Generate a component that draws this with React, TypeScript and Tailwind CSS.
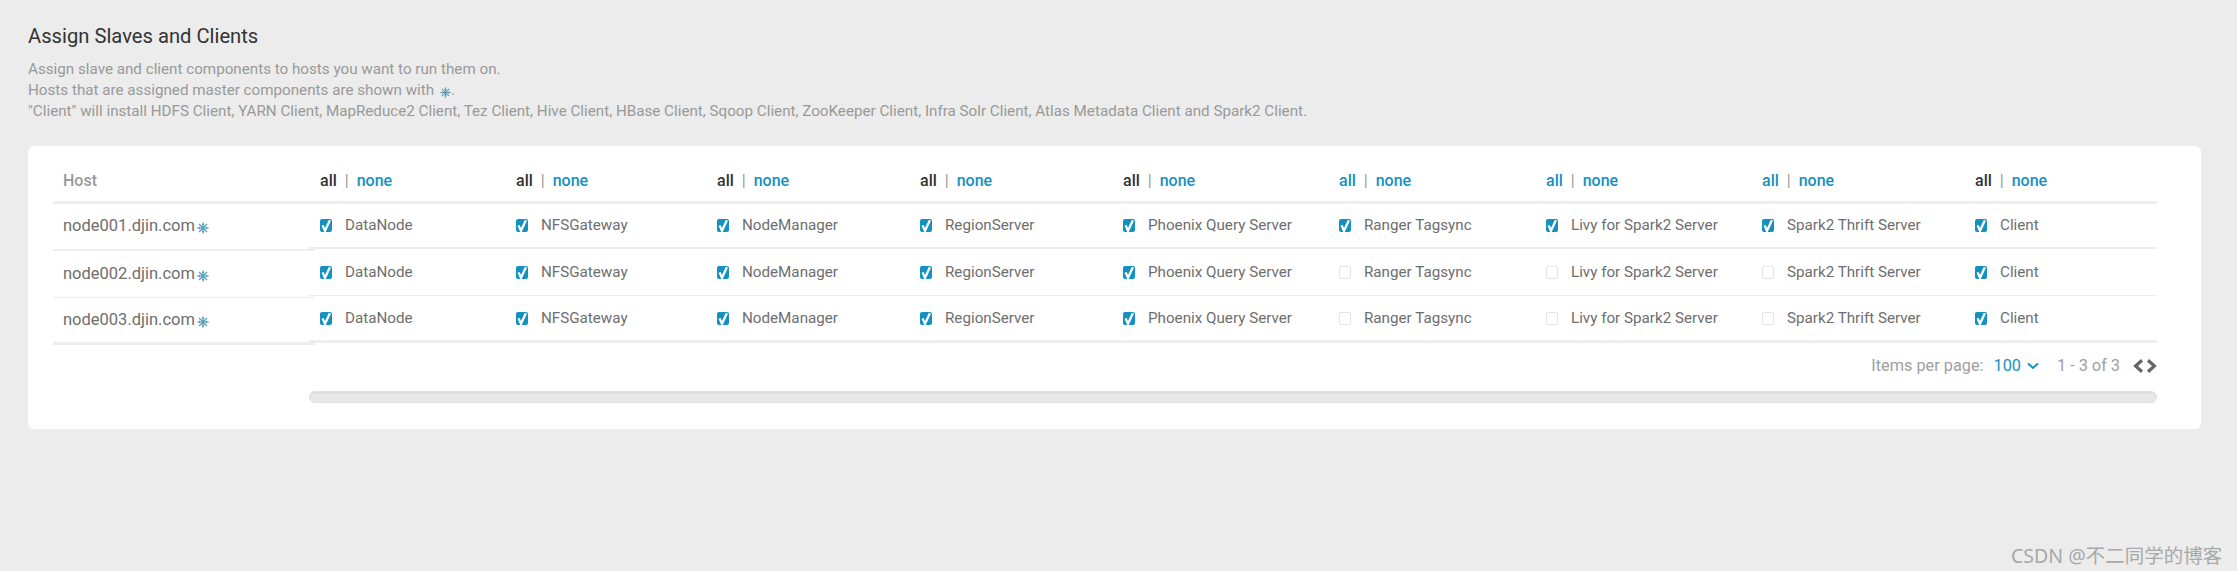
const blue = "text-[#1491c1]";

const columns = [
  { w: "w-[196px]", allBlue: false, label: "DataNode", on: [true, true, true] },
  { w: "w-[201px]", allBlue: false, label: "NFSGateway", on: [true, true, true] },
  { w: "w-[203px]", allBlue: false, label: "NodeManager", on: [true, true, true] },
  { w: "w-[203px]", allBlue: false, label: "RegionServer", on: [true, true, true] },
  { w: "w-[216px]", allBlue: false, label: "Phoenix Query Server", on: [true, true, true] },
  { w: "w-[207px]", allBlue: true, label: "Ranger Tagsync", on: [true, false, false] },
  { w: "w-[216px]", allBlue: true, label: "Livy for Spark2 Server", on: [true, false, false] },
  { w: "w-[213px]", allBlue: true, label: "Spark2 Thrift Server", on: [true, false, false] },
  { w: "w-[193px]", allBlue: false, label: "Client", on: [true, true, true] },
];

function Star({ className = "" }: { className?: string }) {
  return (
    <svg viewBox="0 0 12 12" className={className} fill="none" stroke="#5d9fb8" strokeWidth="1.2">
      <path d="M6 .2v11.6M.2 6h11.6M2 2l8 8M10 2l-8 8M5 2 6 3.2 7 2M5 10 6 8.8 7 10M2 5 3.2 6 2 7M10 5 8.8 6 10 7" />
    </svg>
  );
}

function Check({ on }: { on: boolean }) {
  if (!on)
    return <span className="block w-[12px] h-[13px] rounded-[2px] border border-[#e4e4e4] bg-white shrink-0" />;
  return (
    <span className="block w-[12px] h-[13px] rounded-[2px] bg-[#1491c1] shrink-0 overflow-hidden">
      <svg viewBox="0 0 12 13" className="w-[12px] h-[13px]" fill="none" stroke="#fff" strokeWidth="2.3">
        <path d="M2.6 6.4 5 11.8 9.9 1.2" />
      </svg>
    </span>
  );
}

const hosts = ["node001.djin.com", "node002.djin.com", "node003.djin.com"];
const leftRows = ["h-[47px]", "h-[47px]", "h-[47px]"];
const rightRows = ["h-[45px]", "h-[47px]", "h-[47px]"];
const rowBorders = ["border-b-2 border-[#eeeeee]", "border-b border-[#eeeeee]", "border-b-[3px] border-[#eeeeee]"];

export default function App() {
  return (
    <div className="min-h-[571px] bg-[#ececec] relative font-['Roboto',sans-serif]">
      <div className="pt-[26px] pl-[28px] pr-[36px]">
        <h1 className="text-[20.2px] leading-[21px] font-normal text-[#333333]">Assign Slaves and Clients</h1>
        <div className="mt-[11px] pt-[1px] text-[15.2px] leading-[21px] text-[#999999]">
          <p>Assign slave and client components to hosts you want to run them on.</p>
          <p className="flex items-center">
            Hosts that are assigned master components are shown with
            <Star className="w-[11px] h-[11px] ml-[6px] mt-[3px]" />
            <span>.</span>
          </p>
          <p>
            "Client" will install HDFS Client, YARN Client, MapReduce2 Client, Tez Client, Hive Client, HBase Client, Sqoop Client, ZooKeeper Client, Infra Solr Client, Atlas Metadata Client and Spark2 Client.
          </p>
        </div>

        <div className="mt-[24px] bg-white rounded-[6px] h-[283px] pt-[11px] pl-[25px] pr-[44px]">
          <div className="flex w-[2104px]">
            <div className="w-[262px] shrink-0">
              <div className="h-[47px] border-b-[3px] border-[#eeeeee] pl-[10px] pt-[3px] flex items-center text-[16px] font-medium text-[#999999]">
                Host
              </div>
              {hosts.map((h, i) => (
                <div key={h} className={`${leftRows[i]} ${rowBorders[i]} pl-[10px] flex items-center text-[16.5px] text-[#6e6e6e]`}>
                  <span>{h}</span>
                  <Star className="w-[12px] h-[12px] ml-[2px] mt-[3px]" />
                </div>
              ))}
            </div>
            <div className="-ml-[6px] flex-1">
              <div className="flex h-[47px] border-b-[3px] border-[#eeeeee]">
                {columns.map((c, i) => (
                  <div key={i} className={`${c.w} pl-[11px] pt-[3px] flex items-center text-[16px] font-medium`}>
                    <span className={c.allBlue ? blue : "text-[#333333]"}>all</span>
                    <span className="mx-[8px] font-normal text-[#999999]">|</span>
                    <span className={blue}>none</span>
                  </div>
                ))}
              </div>
              {[0, 1, 2].map((r) => (
                <div key={r} className={`flex ${rightRows[r]} ${rowBorders[r]}`}>
                  {columns.map((c, i) => (
                    <div key={i} className={`${c.w} pl-[11px] flex items-center text-[15.2px] text-[#6e6e6e]`}>
                      <Check on={c.on[r]} />
                      <span className="ml-[13px]">{c.label}</span>
                    </div>
                  ))}
                </div>
              ))}
              <div className="flex items-center justify-end h-[48px] text-[16.3px] text-[#a0a0a0] pb-[2px]">
                <span>Items per page:</span>
                <span className={`ml-[10px] ${blue}`}>100</span>
                <svg viewBox="0 0 12 8" className="w-[12px] h-[8px] ml-[6px]" fill="none" stroke="#1491c1" strokeWidth="2">
                  <path d="M1 1.5 6 6l5-4.5" />
                </svg>
                <span className="ml-[18px]">1 - 3 of 3</span>
                <svg viewBox="0 0 24 14" className="w-[24px] h-[14px] ml-[13px]" fill="none" stroke="#666666" strokeWidth="3.2">
                  <path d="M9 1.2 2.6 7 9 12.8M15 1.2 21.4 7 15 12.8" />
                </svg>
              </div>
              <div className="h-[12px] rounded-[6px] bg-[#e8e8e8] border border-[#e2e2e2] shadow-[inset_0_1px_2px_rgba(0,0,0,0.08)]" />
            </div>
          </div>
        </div>
      </div>
      <div className="absolute left-[2011px] top-[542px] text-[26px] leading-[22px] text-[#a8a8a8] font-['Noto_Sans','Noto_Sans_CJK_SC',sans-serif] whitespace-nowrap scale-x-100">
        <span className="text-[19.5px]">CSDN @不二同学的博客</span>
      </div>
    </div>
  );
}
